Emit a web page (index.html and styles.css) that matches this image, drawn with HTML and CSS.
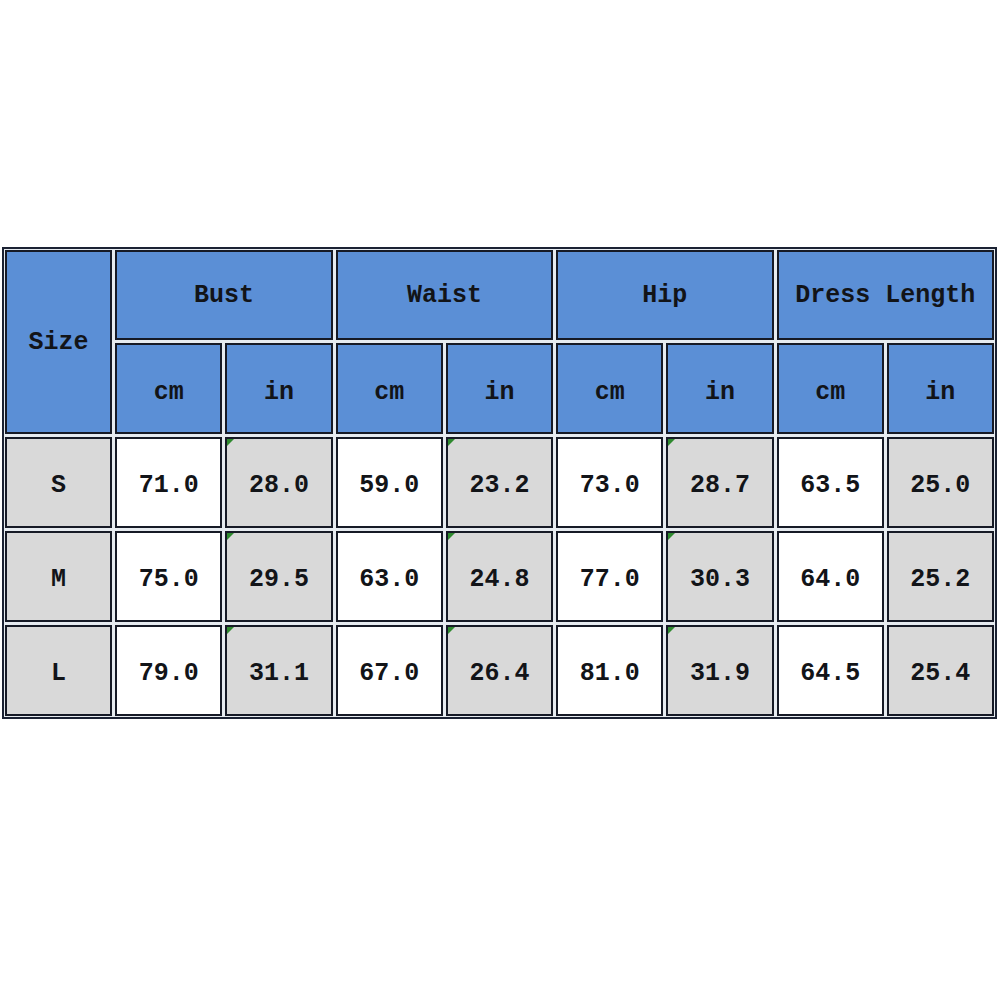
FILE: index.html
```html
<!DOCTYPE html>
<html>
<head>
<meta charset="utf-8">
<link rel="stylesheet" href="styles.css">
</head>
<body>
<div class="chart">
  <div class="cell head size-head">Size</div>
  <div class="cell head span2">Bust</div>
  <div class="cell head span2">Waist</div>
  <div class="cell head span2">Hip</div>
  <div class="cell head span2">Dress Length</div>
  <div class="cell head unit">cm</div>
  <div class="cell head unit">in</div>
  <div class="cell head unit">cm</div>
  <div class="cell head unit">in</div>
  <div class="cell head unit">cm</div>
  <div class="cell head unit">in</div>
  <div class="cell head unit">cm</div>
  <div class="cell head unit">in</div>

  <div class="cell gray">S</div>
  <div class="cell white">71.0</div>
  <div class="cell gray flag">28.0</div>
  <div class="cell white">59.0</div>
  <div class="cell gray flag">23.2</div>
  <div class="cell white">73.0</div>
  <div class="cell gray flag">28.7</div>
  <div class="cell white">63.5</div>
  <div class="cell gray">25.0</div>

  <div class="cell gray">M</div>
  <div class="cell white">75.0</div>
  <div class="cell gray flag">29.5</div>
  <div class="cell white">63.0</div>
  <div class="cell gray flag">24.8</div>
  <div class="cell white">77.0</div>
  <div class="cell gray flag">30.3</div>
  <div class="cell white">64.0</div>
  <div class="cell gray">25.2</div>

  <div class="cell gray">L</div>
  <div class="cell white">79.0</div>
  <div class="cell gray flag">31.1</div>
  <div class="cell white">67.0</div>
  <div class="cell gray flag">26.4</div>
  <div class="cell white">81.0</div>
  <div class="cell gray flag">31.9</div>
  <div class="cell white">64.5</div>
  <div class="cell gray">25.4</div>
</div>
</body>
</html>
```

FILE: styles.css
```css
html, body {
  margin: 0;
  padding: 0;
  background: #ffffff;
}

body {
  width: 1000px;
  height: 1000px;
  font-family: "Liberation Mono", "DejaVu Sans Mono", monospace;
}

.chart {
  margin: 247px 0 0 2px;
  width: 995px;
  box-sizing: border-box;
  border: 2px solid #1b2233;
  padding: 1px;
  background: #e6ebf0;
  display: grid;
  grid-template-columns: repeat(9, 1fr);
  grid-template-rows: 90px 91px 91px 91px 91px;
  gap: 3px;
}

.cell {
  position: relative;
  border: 2px solid #161a26;
  display: flex;
  align-items: center;
  justify-content: center;
  font-weight: bold;
  font-size: 25px;
  color: #121418;
  padding-top: 6px;
  box-sizing: border-box;
}

.head {
  background: #5b8fd6;
  padding-top: 0;
}

.head.unit {
  padding-top: 8px;
}

.size-head {
  grid-row: span 2;
}

.span2 {
  grid-column: span 2;
}

.gray {
  background: #d9d9d9;
}

.white {
  background: #ffffff;
}

.flag::before {
  content: "";
  position: absolute;
  top: 0;
  left: 0;
  width: 0;
  height: 0;
  border-top: 7px solid #2f8a2f;
  border-right: 7px solid transparent;
}
```
